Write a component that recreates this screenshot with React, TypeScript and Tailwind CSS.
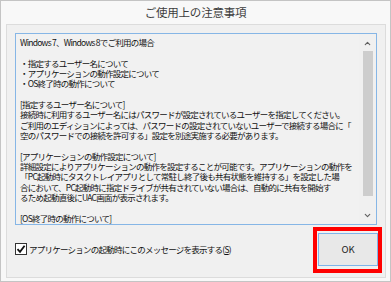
import { ChevronDown, ChevronUp } from 'lucide-react';

const lines = [
  'Windows 7、Windows 8でご利用の場合',
  '',
  '・指定するユーザー名について',
  '・アプリケーションの動作設定について',
  '・OS終了時の動作について',
  '',
  '[指定するユーザー名について]',
  '接続時に利用するユーザー名にはパスワードが設定されているユーザーを指定してください。',
  'ご利用のエディションによっては、パスワードの設定されていないユーザーで接続する場合に「',
  '空のパスワードでの接続を許可する」設定を別途実施する必要があります。',
  '',
  '[アプリケーションの動作設定について]',
  '詳細設定によりアプリケーションの動作を設定することが可能です。アプリケーションの動作を',
  '「PC起動時にタスクトレイアプリとして常駐し終了後も共有状態を維持する」を設定した場',
  '合において、PC起動時に指定ドライブが共有されていない場合は、自動的に共有を開始す',
  'るため起動直後にUAC画面が表示されます。',
  '',
  '[OS終了時の動作について]',
];

export default function App() {
  return (
    <div
      className="flex h-[282px] w-[391px] flex-col border border-[#c4c4c4] bg-[#f8f8f8] text-[#111]"
      style={{ fontFamily: '"Noto Sans CJK JP", "Noto Sans", sans-serif' }}
    >
      {/* title */}
      <div className="flex h-[23px] items-center justify-center pt-[1px] text-[11.5px] tracking-[-0.2px] text-[#3c3c3c]">
        ご使用上の注意事項
      </div>

      {/* panel */}
      <div className="mb-[3px] ml-[5px] mr-[4px] flex flex-1 flex-col border border-[#dcdcdc] bg-[#f0f0f0] px-[8px] pt-[8px]">
        {/* text box */}
        <div className="flex h-[192px] border border-[#86b6e6] bg-[#f1f1f1]">
          <div className="flex-1 overflow-hidden pl-[4px] pt-[3px] text-[8.5px] leading-[10.35px] tracking-[-0.75px]">
            {lines.map((l, i) => (
              <div key={i} className="h-[10.35px] whitespace-nowrap">
                {l}
              </div>
            ))}
          </div>
          <div className="flex w-[17px] flex-col items-center bg-[#f0f0f0] py-[2px]">
            <ChevronUp size={9} strokeWidth={3} className="mt-[3px] text-[#606060]" />
            <div className="mt-[3px] h-[145px] w-[10px] bg-[#cdcdcd]" />
            <div className="flex-1" />
            <ChevronDown size={9} strokeWidth={3} className="mb-[2px] text-[#606060]" />
          </div>
        </div>

        {/* bottom row */}
        <div className="mt-[8px] flex items-start justify-between">
          <label className="mt-[10px] flex items-center gap-[2px] text-[8.5px] tracking-[-0.75px]">
            <span className="flex h-[12px] w-[12px] items-center justify-center border border-[#333] bg-white">
              <svg width="10" height="10" viewBox="0 0 10 10">
                <path d="M1.5 5.2 L4 7.8 L8.6 1.8" fill="none" stroke="#111" strokeWidth="1.8" />
              </svg>
            </span>
            <span>
              アプリケーションの起動時にこのメッセージを表示する(<span className="underline">S</span>)
            </span>
          </label>
          <div className="relative mr-[-1px]">
            <button className="flex h-[33px] w-[60px] items-center justify-center border border-[#7eb4ea] bg-[#e8e8e8] text-[9.5px] text-[#222]">
              OK
            </button>
            <div className="pointer-events-none absolute -bottom-[7px] -left-[5px] -right-[4px] -top-[6px] border-[4px] border-[#ff0000]" />
          </div>
        </div>
      </div>
    </div>
  );
}
